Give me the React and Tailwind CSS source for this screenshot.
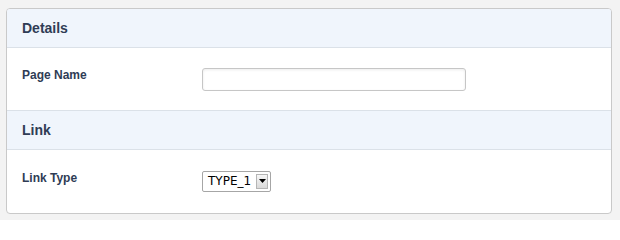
export default function App() {
  const font = { fontFamily: '"Liberation Sans", Arial, sans-serif' };
  return (
    <div className="w-[620px] h-[220px] bg-[#f3f3f3] pt-[8px] pl-[6px]" style={font}>
      <div className="w-[606px] h-[206px] bg-white border border-[#c9c9c9] rounded-[4px] overflow-hidden flex flex-col">
        <div className="h-[39px] bg-[#f0f5fc] border-b border-[#dbe1e8] flex items-center pl-[15px]">
          <span className="text-[14px] font-bold text-[#2f3c55] leading-none">Details</span>
        </div>
        <div className="h-[63px] border-b border-[#dbe1e8] flex items-center pl-[15px]">
          <span className="w-[180px] text-[12px] font-bold text-[#2f3c55] leading-[14px] pb-[8px]">Page Name</span>
          <div className="w-[264px] h-[23px] border border-[#c6c6c6] rounded-[3px] bg-white shadow-[inset_0_1px_3px_rgba(0,0,0,0.08)]"></div>
        </div>
        <div className="h-[39px] bg-[#f0f5fc] border-b border-[#dbe1e8] flex items-center pl-[15px]">
          <span className="text-[14px] font-bold text-[#2f3c55] leading-none">Link</span>
        </div>
        <div className="flex-1 flex items-center pl-[15px] pb-[1px]">
          <span className="w-[180px] text-[12px] font-bold text-[#2f3c55] leading-[14px] pb-[6px]">Link Type</span>
          <div className="w-[69px] h-[21px] border border-[#a6a6a6] rounded-[2px] bg-white flex items-center pl-[5px] pr-[2px]">
            <span className="flex-1 text-[12px] text-black leading-none" style={{ fontFamily: '"DejaVu Sans", sans-serif' }}>TYPE_1</span>
            <div className="w-[12px] h-[15px] border border-[#b5b5b5] bg-gradient-to-b from-[#f7f7f7] to-[#d9d9d9] flex items-center justify-center">
              <svg width="7" height="4" viewBox="0 0 7 4"><path d="M0 0h7L3.5 4z" fill="#000" /></svg>
            </div>
          </div>
        </div>
      </div>
    </div>
  );
}
